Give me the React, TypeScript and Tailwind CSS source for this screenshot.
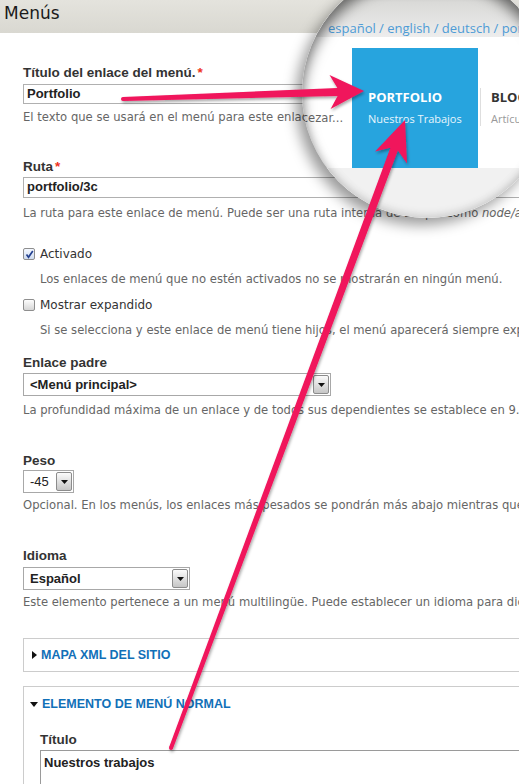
import React from 'react';

const desc = "font-['DejaVu_Sans',sans-serif] text-[11.6px] leading-4 text-[#666]";
const label = "font-['Liberation_Sans',Arial,sans-serif] text-[13.5px] leading-4 font-bold text-[#333]";

function Req() {
  return <span className="text-[#e32] ml-[2px]">*</span>;
}

function DropButton() {
  return (
    <div className="ml-auto mr-[1px] flex h-[19px] w-[16px] items-center justify-center rounded-[2px] border border-[#8c8c8c] bg-gradient-to-b from-[#fbfbfb] to-[#c6c6c6]">
      <svg width="7" height="4" viewBox="0 0 7 4">
        <path d="M0 0h7L3.5 4z" fill="#111" />
      </svg>
    </div>
  );
}

function Select({ value, width, bold = true }: { value: string; width: string; bold?: boolean }) {
  return (
    <div
      className={`${width} flex h-[23px] items-center border border-[#a8a8a8] bg-white pl-[6px] font-['Liberation_Sans',Arial,sans-serif] text-[13px] text-[#222] ${
        bold ? 'font-bold' : 'font-normal'
      }`}
    >
      <span>{value}</span>
      <DropButton />
    </div>
  );
}

function Checkbox({ checked }: { checked?: boolean }) {
  return (
    <div
      className={`flex h-[12px] w-[12px] items-center justify-center rounded-[2px] border border-[#8e8e8e] bg-gradient-to-b ${
        checked ? 'from-[#f4f8ff] to-[#cfdcf0]' : 'from-[#fdfdfd] to-[#d6d6d6]'
      }`}
    >
      {checked && (
        <svg width="9" height="9" viewBox="0 0 9 9">
          <path d="M1.5 4.6l2 2.6L7.8 1" fill="none" stroke="#23408f" strokeWidth="1.7" />
        </svg>
      )}
    </div>
  );
}

function arrowPoints(
  x1: number,
  y1: number,
  x2: number,
  y2: number,
  w1: number,
  w2: number,
  hl: number,
  hw: number
) {
  const dx = x2 - x1;
  const dy = y2 - y1;
  const L = Math.hypot(dx, dy);
  const ux = dx / L;
  const uy = dy / L;
  const px = -uy;
  const py = ux;
  const bx = x2 - ux * hl;
  const by = y2 - uy * hl;
  const nx = x2 - ux * hl * 0.78;
  const ny = y2 - uy * hl * 0.78;
  const pts = [
    [x1 + (px * w1) / 2, y1 + (py * w1) / 2],
    [nx + (px * w2) / 2, ny + (py * w2) / 2],
    [bx + (px * hw) / 2, by + (py * hw) / 2],
    [x2, y2],
    [bx - (px * hw) / 2, by - (py * hw) / 2],
    [nx - (px * w2) / 2, ny - (py * w2) / 2],
    [x1 - (px * w1) / 2, y1 - (py * w1) / 2],
  ];
  return pts.map((p) => `${p[0].toFixed(1)},${p[1].toFixed(1)}`).join(' ');
}

// zoomed-in lens showing the front-end menu
function Magnifier() {
  return (
    <div className="absolute left-[302px] top-[-32px] h-[250px] w-[250px] overflow-hidden rounded-full bg-white shadow-[-6px_7px_14px_rgba(0,0,0,0.4)]">
      <div className="absolute left-0 top-0 h-[69px] w-full bg-gradient-to-b from-[#8f8f8d] via-[#dadad8] to-[#ededed]" />
      <div className="absolute left-[26px] top-[51px] whitespace-nowrap font-['Open_Sans',sans-serif] text-[13px] leading-[18px] text-[#4d9bd6]">
        español / english / deutsch / portugués
      </div>

      <div className="absolute left-0 top-[200px] h-[50px] w-full bg-[#f1f1f1]" />

      <div className="absolute left-[50px] top-[80px] h-[120px] w-[126px] bg-[#27a4de] pl-[16px] pt-[40px] font-['Open_Sans',sans-serif] text-white">
        <div className="text-[13px] font-bold leading-[18px]">PORTFOLIO</div>
        <div className="mt-[4px] text-[11px] leading-[18px] text-[#e8f5fc]">Nuestros Trabajos</div>
      </div>
      <div className="absolute left-[178px] top-[120px] h-[38px] w-px bg-[#dedede]" />
      <div className="absolute left-[189px] top-[120px] font-['Open_Sans',sans-serif]">
        <div className="text-[13px] font-bold leading-[18px] text-[#333]">BLOG</div>
        <div className="mt-[4px] text-[11px] leading-[18px] text-[#999]">Artículos</div>
      </div>

      {/* the page description continues under the lens edge */}
      <div className={`absolute left-[-279px] top-[142px] whitespace-nowrap ${desc}`}>
        El texto que se usará en el menú para este enlacezar...
      </div>

      <div className="absolute inset-0 rounded-full shadow-[inset_0_10px_13px_rgba(0,0,0,0.5),inset_0_-3px_8px_rgba(0,0,0,0.12)]" />
    </div>
  );
}

function Arrows() {
  return (
    <svg className="absolute left-0 top-0" width="519" height="784" viewBox="0 0 519 784">
      <defs>
        <filter id="sh" x="-10%" y="-10%" width="120%" height="120%">
          <feDropShadow dx="1" dy="2" stdDeviation="1.5" floodColor="#000" floodOpacity="0.35" />
        </filter>
      </defs>
      <g fill="#f0145b" filter="url(#sh)">
        <polygon points={arrowPoints(123, 99, 364, 91, 4, 8, 34, 34)} />
        <circle cx="123" cy="99" r="2" />
        <polygon points={arrowPoints(171, 748, 405, 120, 4, 8, 40, 34)} />
        <circle cx="171" cy="748" r="2" />
      </g>
    </svg>
  );
}

export default function App() {
  return (
    <div className="relative h-[784px] w-[519px] overflow-hidden bg-white">
      {/* Page title bar */}
      <div className="h-[33px] bg-gradient-to-b from-[#e4e3dd] to-[#d9d8d1] pl-[4px] font-['DejaVu_Sans',sans-serif] text-[17px] leading-[27px] text-[#1a1a1a]">
        Menús
      </div>

      <div className="pl-[23px]">
        <div className={`mt-[32px] ${label}`}>
          Título del enlace del menú.
          <Req />
        </div>
        <div className="mt-[3px] h-[20px] w-[600px] border border-[#b0b0b0] pl-[3px] font-['Liberation_Sans',Arial,sans-serif] text-[13px] font-bold leading-[17px] text-[#222]">
          Portfolio
        </div>
        <div className={`mt-[5px] whitespace-nowrap ${desc}`}>El texto que se usará en el menú para este enlace</div>

        <div className={`mt-[34px] ${label}`}>
          Ruta
          <Req />
        </div>
        <div className="mt-[2px] h-[21px] w-[600px] border border-[#b0b0b0] pl-[3px] font-['Liberation_Sans',Arial,sans-serif] text-[13px] font-bold leading-[18px] text-[#222]">
          portfolio/3c
        </div>
        <div className={`mt-[7px] whitespace-nowrap ${desc}`}>
          La ruta para este enlace de menú. Puede ser una ruta interna de Drupal como <em>node/add</em>
        </div>

        <div className="mt-[25px] flex h-4 items-center gap-[5px] font-['DejaVu_Sans',sans-serif] text-[12px] text-[#333]">
          <Checkbox checked />
          <span>Activado</span>
        </div>
        <div className={`mt-[9px] pl-[17px] whitespace-nowrap ${desc}`}>
          Los enlaces de menú que no estén activados no se mostrarán en ningún menú.
        </div>

        <div className="mt-[10px] flex h-4 items-center gap-[5px] font-['DejaVu_Sans',sans-serif] text-[12px] text-[#333]">
          <Checkbox />
          <span>Mostrar expandido</span>
        </div>
        <div className={`mt-[9px] pl-[17px] whitespace-nowrap ${desc}`}>
          Si se selecciona y este enlace de menú tiene hijos, el menú aparecerá siempre expandido.
        </div>

        <div className={`mt-[17px] ${label}`}>Enlace padre</div>
        <div className="mt-[2px]">
          <Select value="<Menú principal>" width="w-[308px]" />
        </div>
        <div className={`mt-[6px] whitespace-nowrap ${desc}`}>
          La profundidad máxima de un enlace y de todos sus dependientes se establece en 9.
        </div>

        <div className={`mt-[35px] ${label}`}>Peso</div>
        <div className="mt-[1px]">
          <Select value="-45" width="w-[51px]" bold={false} />
        </div>
        <div className={`mt-[4px] whitespace-nowrap ${desc}`}>
          Opcional. En los menús, los enlaces más pesados se pondrán más abajo mientras que los más ligeros arriba.
        </div>

        <div className={`mt-[35px] ${label}`}>Idioma</div>
        <div className="mt-[3px]">
          <Select value="Español" width="w-[167px]" />
        </div>
        <div className={`mt-[4px] whitespace-nowrap ${desc}`}>
          Este elemento pertenece a un menú multilingüe. Puede establecer un idioma para dicho elemento.
        </div>

        {/* collapsed fieldset */}
        <div className="mt-[28px] flex h-[34px] w-[560px] items-center gap-[4px] border border-[#cccccc] pl-[8px] font-['Liberation_Sans',Arial,sans-serif] text-[12.5px] font-bold text-[#1170b8]">
          <svg width="5" height="8" viewBox="0 0 5 8">
            <path d="M0 0l5 4-5 4z" fill="#111" />
          </svg>
          <span>MAPA XML DEL SITIO</span>
        </div>

        {/* expanded fieldset */}
        <div className="mt-[14px] w-[560px] border border-[#cccccc] pb-[20px]">
          <div className="mt-[9px] flex h-4 items-center gap-[4px] pl-[6px] font-['Liberation_Sans',Arial,sans-serif] text-[12.5px] font-bold text-[#1170b8]">
            <svg width="8" height="5" viewBox="0 0 8 5">
              <path d="M0 0h8L4 5z" fill="#111" />
            </svg>
            <span>ELEMENTO DE MENÚ NORMAL</span>
          </div>
          <div className="pl-[16px]">
            <div className={`mt-[20px] ${label}`}>Título</div>
            <div className="mt-[2px] h-[60px] w-[520px] border border-[#9a9a9a] pl-[3px] pt-[3px] font-['Liberation_Sans',Arial,sans-serif] text-[13px] font-bold leading-[18px] text-[#222]">
              Nuestros trabajos
            </div>
          </div>
        </div>
      </div>

      <Magnifier />
      <Arrows />
    </div>
  );
}
